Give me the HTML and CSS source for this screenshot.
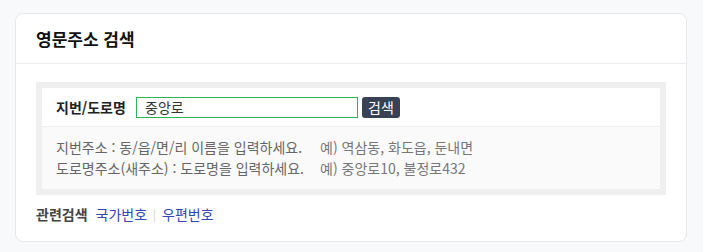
FILE: index.html
```html
<!DOCTYPE html>
<html lang="ko">
<head>
	<meta charset="utf-8" />
	<title>영문주소 검색</title>
	<link rel="stylesheet" href="styles.css">
</head>
<body>
	<div class="card">
		<div class="card-head">
			<h2>영문주소 검색</h2>
		</div>
		<div class="card-body">
			<div class="search-box">
				<form class="search-row" onsubmit="return false;">
					<label for="addr">지번/도로명</label>
					<input id="addr" type="text" value="중앙로" />
					<button type="submit">검색</button>
				</form>
				<div class="help">
					<span>지번주소 : 동/읍/면/리 이름을 입력하세요.</span>
					<span class="ex">예) 역삼동, 화도읍, 둔내면</span>
					<span>도로명주소(새주소) : 도로명을 입력하세요.</span>
					<span class="ex">예) 중앙로10, 불정로432</span>
				</div>
			</div>
			<div class="related">
				<b>관련검색</b>
				<a href="#">국가번호</a>
				<span class="sep">|</span>
				<a href="#">우편번호</a>
			</div>
		</div>
	</div>
</body>
</html>
```

FILE: styles.css
```css
body {
	margin: 0;
	padding: 13px 15px;
	background-color: #f8f9fb;
	font-family: "Noto Sans CJK KR", "Noto Sans", sans-serif;
	font-size: 14px;
	color: #333;
}
.card {
	width: 670px;
	background-color: #fff;
	border: 1px solid #e6e8eb;
	border-radius: 8px;
}
.card-head {
	height: 49px;
	display: flex;
	align-items: center;
	padding: 0 20px;
	border-bottom: 1px solid #eceef0;
}
.card-head h2 {
	margin: 0;
	font-size: 17px;
	font-weight: bold;
	color: #111;
}
.card-body {
	padding: 18px 20px 0;
}
.search-box {
	border: 6px solid #efefef;
}
.search-row {
	display: flex;
	align-items: center;
	height: 38px;
	padding: 0 14px;
	margin: 0;
	border-bottom: 1px solid #eeeeee;
}
.search-row label {
	font-weight: bold;
	color: #222;
	width: 80px;
}
.search-row input {
	box-sizing: border-box;
	width: 222px;
	height: 21px;
	padding: 0 8px;
	border: 1px solid #2db35a;
	font-family: inherit;
	font-size: 14px;
	color: #333;
	outline: none;
}
.search-row button {
	margin-left: 4px;
	height: 21px;
	padding: 0 6px;
	border: none;
	border-radius: 3px;
	background-color: #394255;
	color: #fff;
	font-family: inherit;
	font-size: 14px;
	line-height: 21px;
}
.help {
	display: grid;
	grid-template-columns: auto 1fr;
	column-gap: 16px;
	padding: 10px 14px 10px;
	background-color: #fafafa;
	color: #666;
	line-height: 21px;
}
.help .ex {
	color: #777;
}
.related {
	display: flex;
	align-items: center;
	height: 38px;
	padding-bottom: 8px;
}
.related b {
	font-weight: bold;
	color: #444;
	margin-right: 8px;
}
.related a {
	color: #3346b5;
	text-decoration: none;
}
.related .sep {
	color: #ccc;
	font-size: 11px;
	margin: 0 6px;
}
```
